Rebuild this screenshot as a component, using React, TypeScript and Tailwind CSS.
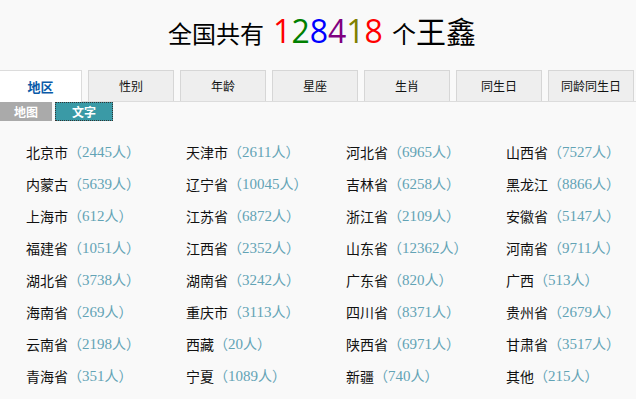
import React from 'react';

const digits = [
  { d: '1', c: 'text-[#ff0000]' },
  { d: '2', c: 'text-[#008000]' },
  { d: '8', c: 'text-[#0000ff]' },
  { d: '4', c: 'text-[#800080]' },
  { d: '1', c: 'text-[#808000]' },
  { d: '8', c: 'text-[#ff0000]' },
];

const tabs = ['性别', '年龄', '星座', '生肖', '同生日', '同龄同生日'];

const regions: [string, number][] = [
  ['北京市', 2445], ['天津市', 2611], ['河北省', 6965], ['山西省', 7527],
  ['内蒙古', 5639], ['辽宁省', 10045], ['吉林省', 6258], ['黑龙江', 8866],
  ['上海市', 612], ['江苏省', 6872], ['浙江省', 2109], ['安徽省', 5147],
  ['福建省', 1051], ['江西省', 2352], ['山东省', 12362], ['河南省', 9711],
  ['湖北省', 3738], ['湖南省', 3242], ['广东省', 820], ['广西', 513],
  ['海南省', 269], ['重庆市', 3113], ['四川省', 8371], ['贵州省', 2679],
  ['云南省', 2198], ['西藏', 20], ['陕西省', 6971], ['甘肃省', 3517],
  ['青海省', 351], ['宁夏', 1089], ['新疆', 740], ['其他', 215],
];

const cjk = "font-['Noto_Sans_CJK_SC',sans-serif]";

export default function App() {
  return (
    <div className={`w-[636px] h-[399px] overflow-hidden bg-[#f9f9f9] ${cjk}`}>
      {/* Title */}
      <div className="h-[70px] flex items-center justify-center pb-[8px] pl-[8px]">
        <h1 className="flex items-baseline text-[24px] leading-none text-black">
          <span>全国共有</span>
          <span className="mx-[9px] text-[32px] font-['Open_Sans','Liberation_Sans',sans-serif]">
            {digits.map((x, i) => (
              <span key={i} className={x.c}>{x.d}</span>
            ))}
          </span>
          <span>个</span>
          <span className="text-[30px]">王鑫</span>
        </h1>
      </div>

      {/* Tabs */}
      <div className="flex h-[32px] gap-[6px] border-b border-[#dcdcdc]">
        <div className="w-[82px] -mb-px bg-white border-t border-r border-[#dcdcdc] flex items-center justify-center text-[13px] font-bold text-[#0a5aa8]">
          地区
        </div>
        {tabs.map((t) => (
          <div
            key={t}
            className="w-[86px] bg-[#eeeeee] border border-b-0 border-[#d6d6d6] flex items-center justify-center text-[12px] text-[#111]"
          >
            {t}
          </div>
        ))}
      </div>

      {/* Sub tabs */}
      <div className="flex gap-[3px] h-[19px]">
        <div className="w-[52px] bg-[#aaaaaa] text-white text-[12px] font-bold flex items-center justify-center">
          地图
        </div>
        <div className="w-[58px] bg-[#3a9aa6] text-white text-[12px] font-bold flex items-center justify-center border border-dotted border-[#333]">
          文字
        </div>
      </div>

      {/* Region list */}
      <div className="grid grid-cols-[160px_160px_160px_160px] pl-[26px] pt-[19px] gap-y-[8px]">
        {regions.map(([name, n]) => (
          <div key={name} className="h-[24px] flex items-center text-[14px] whitespace-nowrap">
            <span className="text-[#111]">{name}</span>
            <span className="text-[#62a3b5]">
              （<span className="font-['Liberation_Serif',serif] text-[15px]">{n}</span>人）
            </span>
          </div>
        ))}
      </div>
    </div>
  );
}
